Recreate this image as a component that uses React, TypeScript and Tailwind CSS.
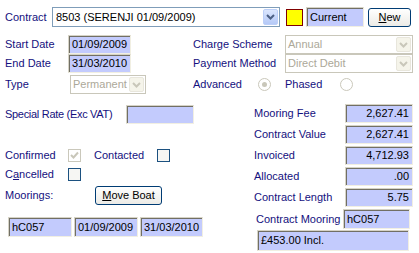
import React from 'react'

const label = 'text-[#14107e] whitespace-nowrap'

function Field({ w, h = 'h-[19px]', right = false, text = '' }: { w: string; h?: string; right?: boolean; text?: string }) {
  return (
    <div
      className={`${w} ${h} shrink-0 bg-[#c3cbfd] border border-t-[#d6d3c6] border-l-[#d6d3c6] border-r-[#f1efe2] border-b-[#f1efe2] shadow-[inset_1px_1px_0_#716f64] flex items-center px-[3px] text-black ${right ? 'justify-end' : ''}`}
    >
      {text}
    </div>
  )
}

function Chevron({ color }: { color: string }) {
  return (
    <svg width="9" height="6" viewBox="0 0 9 6">
      <path d="M1 1l3.5 3.5L8 1" fill="none" stroke={color} strokeWidth="2" />
    </svg>
  )
}

function DisabledSelect({ w, text }: { w: string; text: string }) {
  return (
    <div className={`${w} h-[19px] shrink-0 border border-[#c9c7ba] bg-white flex items-center`}>
      <span className="flex-1 pl-[2px] text-[#aca899]">{text}</span>
      <div className="w-[15px] h-[15px] mr-[1px] border border-[#e8e6dc] bg-[#f5f4ea] rounded-[2px] flex items-center justify-center">
        <Chevron color="#c9c7ba" />
      </div>
    </div>
  )
}

function Check({ on = false, disabled = false }: { on?: boolean; disabled?: boolean }) {
  return (
    <div
      className={`w-[13px] h-[13px] shrink-0 border flex items-center justify-center ${
        disabled ? 'border-[#cac8bb] bg-white' : 'border-[#1c5180] bg-[#f6f6f3]'
      }`}
    >
      {on && (
        <svg width="9" height="9" viewBox="0 0 9 9">
          <path d="M1 4l2.5 2.5L8 1.5" fill="none" stroke="#c9c7ba" strokeWidth="2" />
        </svg>
      )}
    </div>
  )
}

function Radio({ on = false }: { on?: boolean }) {
  return (
    <div className="w-[13px] h-[13px] shrink-0 rounded-full border border-[#cac8bb] bg-white flex items-center justify-center">
      {on && <div className="w-[5px] h-[5px] rounded-full bg-[#c9c7ba]" />}
    </div>
  )
}

function Button({ w, children }: { w: string; children: React.ReactNode }) {
  return (
    <div
      className={`${w} h-[19px] shrink-0 rounded-[3px] border border-[#003c74] bg-gradient-to-b from-white to-[#ecebe6] flex items-center justify-center text-black`}
    >
      {children}
    </div>
  )
}

export default function App() {
  return (
    <div className="w-[419px] h-[253px] bg-white text-[11px] leading-none font-['Liberation_Sans',Arial,sans-serif] overflow-hidden">
      {/* contract row */}
      <div className="flex items-center pt-[7px] pl-[5px]">
        <span className={`${label} w-[47px]`}>Contract</span>
        <div className="w-[228px] h-[20px] border border-[#7f9db9] bg-white flex items-center">
          <span className="flex-1 pl-[3px] text-black">8503 (SERENJI 01/09/2009)</span>
          <div className="w-[15px] h-[16px] mr-[1px] rounded-[2px] bg-gradient-to-b from-[#dbe6fe] to-[#b5c9f7] border border-[#bccff8] flex items-center justify-center">
            <Chevron color="#4d6185" />
          </div>
        </div>
        <div className="w-[17px] h-[17px] ml-[6px] border border-[#800000] bg-[#ffff00]" />
        <div className="ml-[3px]">
          <Field w="w-[58px]" h="h-[20px]" text="Current" />
        </div>
        <div className="ml-[4px]">
          <Button w="w-[43px]">
            <span><u>N</u>ew</span>
          </Button>
        </div>
      </div>

      {/* dates / schemes */}
      <div className="flex pl-[5px] mt-[8px]">
        <div className="flex flex-col w-[188px]">
          <div className="flex items-center h-[19px]">
            <span className={`${label} w-[63px]`}>Start Date</span>
            <Field w="w-[63px]" text="01/09/2009" />
          </div>
          <div className="flex items-center h-[19px]">
            <span className={`${label} w-[63px]`}>End Date</span>
            <Field w="w-[63px]" text="31/03/2010" />
          </div>
          <div className="flex items-center h-[19px] mt-[2px]">
            <span className={`${label} w-[65px]`}>Type</span>
            <DisabledSelect w="w-[76px]" text="Permanent" />
          </div>
        </div>
        <div className="flex flex-col">
          <div className="flex items-center h-[19px]">
            <span className={`${label} w-[92px]`}>Charge Scheme</span>
            <DisabledSelect w="w-[128px]" text="Annual" />
          </div>
          <div className="flex items-center h-[19px]">
            <span className={`${label} w-[92px]`}>Payment Method</span>
            <DisabledSelect w="w-[128px]" text="Direct Debit" />
          </div>
          <div className="flex items-center h-[19px] mt-[2px]">
            <span className={`${label} w-[65px]`}>Advanced</span>
            <Radio on />
            <span className={`${label} w-[55px] ml-[14px]`}>Phased</span>
            <Radio />
          </div>
        </div>
      </div>

      {/* lower section */}
      <div className="flex pl-[5px] mt-[10px]">
        <div className="flex flex-col w-[249px]">
          <div className="flex items-center h-[19px] mt-[1px]">
            <span className={`${label} w-[121px] tracking-[-0.3px]`}>Special Rate (Exc VAT)</span>
            <Field w="w-[68px]" />
          </div>
          <div className="flex items-center h-[13px] mt-[25px]">
            <span className={`${label} w-[63px]`}>Confirmed</span>
            <Check on disabled />
            <span className={`${label} w-[63px] ml-[13px]`}>Contacted</span>
            <Check />
          </div>
          <div className="flex items-center h-[13px] mt-[6px]">
            <span className={`${label} w-[63px]`}>
              C<u>a</u>ncelled
            </span>
            <Check />
          </div>
          <div className="flex items-center h-[19px] mt-[5px]">
            <span className={`${label} w-[90px]`}>Moorings:</span>
            <Button w="w-[67px]">
              <span><u>M</u>ove Boat</span>
            </Button>
          </div>
          <div className="flex items-center gap-[2px] ml-[3px] mt-[12px]">
            <Field w="w-[64px]" h="h-[20px]" text="hC057" />
            <Field w="w-[64px]" h="h-[20px]" text="01/09/2009" />
            <Field w="w-[63px]" h="h-[20px]" text="31/03/2010" />
          </div>
        </div>
        <div className="flex flex-col gap-[2px]">
          {[
            ['Mooring Fee', '2,627.41'],
            ['Contract Value', '2,627.41'],
            ['Invoiced', '4,712.93'],
            ['Allocated', '.00'],
            ['Contract Length', '5.75'],
          ].map(([k, v]) => (
            <div key={k} className="flex items-center h-[19px]">
              <span className={`${label} w-[91px]`}>{k}</span>
              <Field w="w-[68px]" right text={v} />
            </div>
          ))}
          <div className="flex items-center h-[20px] ml-[2px]">
            <span className={`${label} w-[87px]`}>Contract Mooring</span>
            <Field w="w-[67px]" h="h-[20px]" text="hC057" />
          </div>
          <div className="ml-[3px] -mt-[1px]">
            <Field w="w-[152px]" h="h-[21px]" text="£453.00 Incl." />
          </div>
        </div>
      </div>
    </div>
  )
}
